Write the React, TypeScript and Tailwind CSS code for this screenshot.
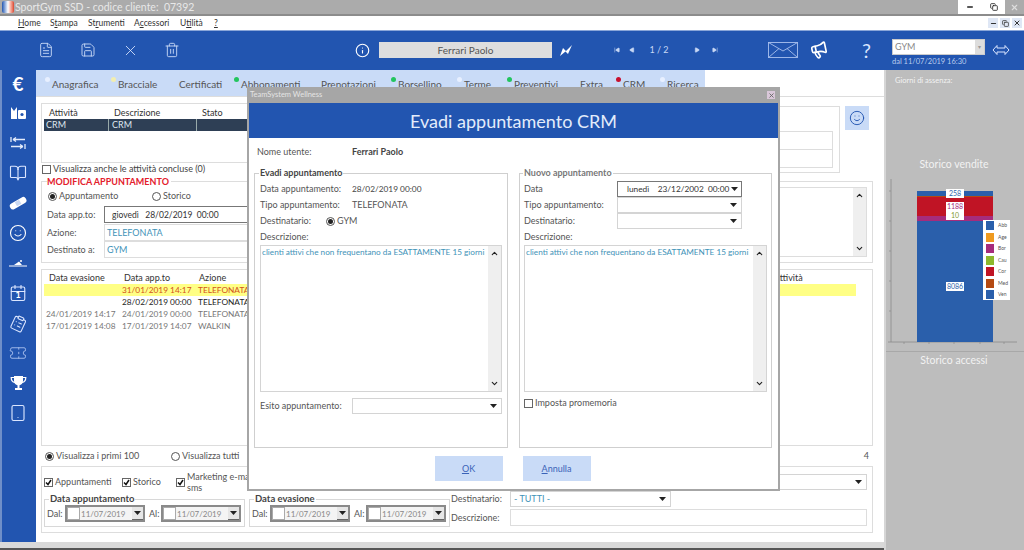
import React from "react";
import { FileText, Save, X, Trash2, Info, SkipBack, SkipForward, Play, Megaphone, BookOpen, Smile, Calendar, ClipboardList, Ticket, Tablet, Minus, Copy, ChevronUp, ChevronDown } from "lucide-react";

const Caret = () => (
  <svg width="7" height="4" viewBox="0 0 7 4" className="shrink-0"><polygon points="0,0 7,0 3.5,4" fill="#222" /></svg>
);

const U = ({ t, i }: { t: string; i: number }) => (
  <span>
    {t.slice(0, i)}
    <span className="underline">{t[i]}</span>
    {t.slice(i + 1)}
  </span>
);

const Select = ({ w, text, dark }: { w: string; text?: string; dark?: boolean }) => (
  <div className={`${w} h-[16px] flex items-center justify-between pr-[4px] pl-[3px] border bg-white ${dark ? "border-[#777]" : "border-[#d4d4d4]"}`}>
    <span className="text-[#3f93b8] whitespace-nowrap">{text}</span>
    <Caret />
  </div>
);

const ScrollBar = () => (
  <div className="w-[13px] bg-[#efefef] flex flex-col justify-between items-center py-[3px] shrink-0">
    <ChevronUp size={9} strokeWidth={3} color="#222" />
    <ChevronDown size={9} strokeWidth={3} color="#222" />
  </div>
);

const Dot = ({ c }: { c: string }) => <span className={`w-[5px] h-[5px] rounded-full mb-[8px] ml-[-1px] shrink-0 ${c}`} />;

const Radio = ({ on, label }: { on?: boolean; label: string }) => (
  <span className="flex items-center gap-[2px] whitespace-nowrap">
    <span className="w-[9px] h-[9px] rounded-full border border-[#555] flex items-center justify-center bg-white">
      {on && <span className="w-[5px] h-[5px] rounded-full bg-[#222]" />}
    </span>
    {label}
  </span>
);

const Check = ({ on }: { on?: boolean }) => (
  <span className="w-[9px] h-[9px] border border-[#666] bg-white flex items-center justify-center shrink-0">
    {on && (
      <svg width="7" height="7" viewBox="0 0 7 7"><path d="M1 3.5 L3 5.5 L6 1" stroke="#111" strokeWidth="1.5" fill="none" /></svg>
    )}
  </span>
);

const DateBox = () => (
  <div className="w-[80px] h-[17px] flex items-center border-2 border-[#8a8a8a] bg-[#f4f4f4] shrink-0">
    <span className="w-[13px] h-[13px] border border-[#aaa] bg-white shrink-0" />
    <span className="ml-[1px] text-[#888] flex-1 text-[8px]">11/07/2019</span>
    <span className="w-[11px] h-[13px] bg-[#e6e6e6] border-b border-[#666] flex items-center justify-center"><Caret /></span>
  </div>
);

const DateGroup = ({ title }: { title: string }) => (
  <fieldset className="w-[201px] min-w-0 shrink-0 border border-[#d8d8d8] px-[2px] h-[34px]">
    <legend className="ml-[2px] px-[1px] font-bold text-[#444] leading-[12px] text-[9.5px]">{title}</legend>
    <div className="flex items-center gap-[2px]">
      <span className="w-[16px]">Dal:</span>
      <DateBox />
      <span className="ml-[2px] w-[10px]">Al:</span>
      <DateBox />
    </div>
  </fieldset>
);

const tabs: [string, string, string][] = [
  ["Anagrafica", "bg-[#e8f0ff]", "w-[66px]"],
  ["Bracciale", "bg-[#f2eeb0]", "w-[61px]"],
  ["Certificati", "bg-transparent", "w-[62px]"],
  ["Abbonamenti", "bg-[#22c55e]", "w-[80px]"],
  ["Prenotazioni", "bg-transparent", "w-[77px]"],
  ["Borsellino", "bg-[#22c55e]", "w-[66px]"],
  ["Terme", "bg-[#e8f0ff]", "w-[50px]"],
  ["Preventivi", "bg-[#22c55e]", "w-[66px]"],
  ["Extra", "bg-transparent", "w-[43px]"],
  ["CRM", "bg-[#c8102e]", "w-[44px]"],
  ["Ricerca", "bg-[#e8f0ff]", "w-[40px]"],
];

const sideIcons = [
  <span className="text-[19px] font-bold text-white leading-none">€</span>,
  <svg width="17" height="14" viewBox="0 0 17 14"><path d="M1 1 L4 5 L7 1 V13 H1Z" fill="#fff" /><rect x="8" y="4" width="8" height="9" rx="1" fill="#fff" /><circle cx="12" cy="8.5" r="1.6" fill="#2255b0" /></svg>,
  <svg width="16" height="14" viewBox="0 0 16 14" fill="none" stroke="#e4ecfb" strokeWidth="1.3"><path d="M1 1V6M3 3.5H15M3 3.5L6 1.5M3 3.5L6 5.5M15 8V13M13 10.5H1M13 10.5L10 8.5M13 10.5L10 12.5" /></svg>,
  <BookOpen size={18} color="#dbe6ff" strokeWidth={1.5} />,
  <svg width="20" height="14" viewBox="0 0 20 14"><rect x="1" y="4" width="18" height="6.5" rx="3" fill="#fff" transform="rotate(-30 10 7)" /><rect x="7.5" y="4.8" width="5" height="4.6" fill="#c9d8f2" transform="rotate(-30 10 7)" /></svg>,
  <Smile size={18} color="#fff" strokeWidth={1.5} />,
  <svg width="20" height="10" viewBox="0 0 20 10"><path d="M1 8h18" stroke="#fff" strokeWidth="1" /><path d="M6 7 L11 3.5 L14 7z" fill="#fff" /><circle cx="13" cy="3" r="1" fill="#fff" /></svg>,
  <span className="relative flex items-center justify-center"><Calendar size={18} color="#dbe6ff" strokeWidth={1.5} /><span className="absolute text-[9px] font-bold text-white top-[5px]">1</span></span>,
  <ClipboardList size={17} color="#dbe6ff" strokeWidth={1.5} className="rotate-[25deg]" />,
  <Ticket size={18} color="#a9c1ee" strokeWidth={1.2} />,
  <svg width="17" height="16" viewBox="0 0 17 16"><path d="M4 1H13V6C13 8.5 11 10 9.5 10.3V13H12V15H5V13H7.5V10.3C6 10 4 8.5 4 6Z" fill="#fff" /><path d="M4 2.5H1.2C1.2 5.5 2.5 7 5 7.5M13 2.5H15.8C15.8 5.5 14.5 7 12 7.5" fill="none" stroke="#fff" strokeWidth="1.2" /></svg>,
  <Tablet size={18} color="#dbe6ff" strokeWidth={1.5} />,
];

const rows: [string, string, string, string][] = [
  ["", "31/01/2019 14:17", "TELEFONATA", "text-[#d2521c] bg-[#ffff85]"],
  ["", "28/02/2019 00:00", "TELEFONATA", "text-[#222]"],
  ["24/01/2019 14:17", "24/01/2019 00:00", "TELEFONATA", "text-[#777]"],
  ["17/01/2019 14:08", "17/01/2019 14:07", "WALKIN", "text-[#777]"],
];

const legend: [string, string][] = [
  ["#2a5fab", "Abb"], ["#ef9a1f", "Age"], ["#a62c7c", "Bor"], ["#8db82c", "Cau"], ["#c01425", "Cor"], ["#b44a12", "Med"], ["#2a5fab", "Ven"],
];

const desc = "clienti attivi che non frequentano da ESATTAMENTE 15 giorni";

export default function App() {
  return (
    <div className="w-[1024px] h-[550px] overflow-hidden relative flex flex-col bg-white text-[9px] leading-[12px] text-[#555] font-['Lato',sans-serif]">
      {/* Title bar */}
      <div className="h-[16px] bg-[#ababab] border-b-2 border-[#8c8c8c] flex items-start shrink-0">
        <span className="w-[12px] h-[12px] ml-[2px] mt-[1px] rounded-[2px] bg-gradient-to-r from-[#2255b0] via-white to-[#d9402a]" />
        <span className="ml-[1px] text-[10.5px] leading-[14px] text-[#e8e8e8] whitespace-pre">SportGym SSD - codice cliente:  07392</span>
        <div className="ml-auto flex h-[14px]">
          <span className="w-[24px] bg-white flex items-center justify-center"><Minus size={8} strokeWidth={4} color="#222" /></span>
          <span className="w-[23px] bg-white flex items-center justify-center"><Copy size={8} strokeWidth={2.5} color="#222" /></span>
          <span className="w-[19px] flex items-center justify-center"><X size={9} strokeWidth={3} color="#ddd" /></span>
        </div>
      </div>
      {/* Menu */}
      <div className="h-[14px] bg-white flex items-center shrink-0 pl-[18px] text-[8.5px] text-[#333]">
        <span className="w-[32px]"><U t="Home" i={0} /></span>
        <span className="w-[38px]"><U t="Stampa" i={1} /></span>
        <span className="w-[46px]"><U t="Strumenti" i={2} /></span>
        <span className="w-[46px]"><U t="Accessori" i={1} /></span>
        <span className="w-[34px]"><U t="Utilità" i={1} /></span>
        <span><U t="?" i={0} /></span>
        <div className="ml-auto flex gap-[2px] mr-[2px]">
          {[<Minus size={7} strokeWidth={4} />, <Copy size={7} strokeWidth={2.5} />, <X size={8} strokeWidth={3} />].map((ic, i) => (
            <span key={i} className="w-[10px] h-[10px] bg-[#dfe7f5] flex items-center justify-center text-[#333]">{ic}</span>
          ))}
        </div>
      </div>
      {/* Top blue bar */}
      <div className="h-[40px] bg-[#2255b0] border-t border-[#8aa6d8] pb-[1px] flex items-center shrink-0 text-[#c8d8f5]">
        <div className="ml-[25px] w-[42px] flex justify-center"><FileText size={16} strokeWidth={1.4} /></div>
        <div className="w-[42px] flex justify-center"><Save size={16} strokeWidth={1.4} /></div>
        <div className="w-[42px] flex justify-center"><X size={17} strokeWidth={1.2} color="#dbe6ff" /></div>
        <div className="w-[42px] flex justify-center"><Trash2 size={16} strokeWidth={1.4} /></div>
        <div className="ml-[158px] w-[22px] flex justify-center"><Info size={15} strokeWidth={1.8} color="#fff" /></div>
        <div className="ml-[6px] w-[173px] h-[16px] bg-[#dedede] text-[#555] text-[10px] flex items-center justify-center">Ferrari Paolo</div>
        <div className="ml-[6px] w-[16px] flex justify-center">
          <svg width="14" height="13" viewBox="0 0 14 13"><path d="M1 12 L4 4 L7 7 L13 1 L9 10 L6.5 7.5Z" fill="#fff" /></svg>
        </div>
        <div className="ml-[40px] flex items-center gap-[9px]">
          <SkipBack size={6} fill="#c8d8f5" />
          <Play size={6} fill="#c8d8f5" className="rotate-180" />
        </div>
        <div className="w-[46px] ml-[1px] text-center text-[#c8d8f5]">1 / 2</div>
        <div className="ml-[12px] flex items-center gap-[12px]">
          <Play size={6} fill="#c8d8f5" />
          <SkipForward size={6} fill="#c8d8f5" />
        </div>
        <div className="ml-[50px]">
          <svg width="30" height="16" viewBox="0 0 30 16" fill="none" stroke="#a9c1ee" strokeWidth="0.9"><rect x="0.5" y="0.5" width="29" height="15" /><path d="M0.5 0.5 L15 9 L29.5 0.5M0.5 15.5 L11 6.5M29.5 15.5 L19 6.5" /></svg>
        </div>
        <div className="ml-[12px]"><Megaphone size={18} strokeWidth={2.2} color="#fff" className="-rotate-12" /></div>
        <div className="ml-[34px] text-[20px] leading-none text-[#dbe6ff] w-[12px]">?</div>
        <div className="ml-[18px] mt-[5px] flex flex-col">
          <div className="w-[93px] h-[16px] bg-white border border-[#ccc] flex items-center justify-between pl-[2px] text-[#888]">
            <span>GYM</span>
            <span className="w-[9px] h-[14px] bg-[#ddd] flex items-center justify-center text-[#999] text-[6px]">▾</span>
          </div>
          <span className="text-[7.5px] leading-[10px] mt-[2px] text-[#b9ccee]">dal 11/07/2019 16:30</span>
        </div>
        <div className="ml-[7px] w-[18px]">
          <svg width="18" height="12" viewBox="0 0 18 12"><path d="M1 6 L5 1.5 V4 H13 V1.5 L17 6 L13 10.5 V8 H5 V10.5 Z" fill="none" stroke="#dbe6ff" strokeWidth="1" /></svg>
        </div>
      </div>
      {/* Body */}
      <div className="flex flex-1 min-h-0">
        <div className="w-[884px] shrink-0 flex flex-col">
          <div className="flex h-[472px] shrink-0">
            <aside className="w-[36px] bg-[#2255b0] flex flex-col items-center shrink-0 border-l-2 border-[#6f8fc8]">
              <div className="-mt-[2px] flex flex-col items-center">
                {sideIcons.map((ic, i) => (
                  <div key={i} className="h-[30px] flex items-center justify-center shrink-0 mr-[2px]">{ic}</div>
                ))}
              </div>
            </aside>
            <main className="w-[848px] bg-white flex flex-col shrink-0">
              <div className="h-[27px] border-b border-[#dddddd] shrink-0">
                <div className="w-[669px] h-[26px] bg-[#c9dbf7] flex items-center pl-[10px] text-[10px] text-[#555]">
                  {tabs.map(([t, d, w]) => (
                    <div key={t} className={`${w} flex items-center shrink-0 gap-[1px]`}>
                      <Dot c={d} />
                      <span className="pl-[1px] pt-[1px] whitespace-nowrap">{t}</span>
                    </div>
                  ))}
                </div>
              </div>
              <div className="pl-[5px] flex flex-col">
                {/* Top row */}
                <div className="flex mt-[6px] h-[72px]">
                  <div className="w-[500px] flex flex-col">
                    <div className="h-[60px] border border-[#ddd] px-[2px] pt-[3px]">
                      <div className="flex h-[12px] text-[#333]">
                        <span className="w-[65px] pl-[5px]">Attività</span>
                        <span className="w-[88px] pl-[5px]">Descrizione</span>
                        <span className="pl-[5px]">Stato</span>
                      </div>
                      <div className="flex h-[12px] bg-[#2e3f55] text-[#dfe6ef]">
                        <span className="w-[65px] pl-[2px] border-r border-[#9aa]">CRM</span>
                        <span className="w-[88px] pl-[3px] border-r border-[#9aa]">CRM</span>
                      </div>
                    </div>
                    <div className="flex items-center gap-[2px] text-[#444] ml-[1px]"><Check /> Visualizza anche le attività concluse (0)</div>
                  </div>
                  <div className="w-[299px] mt-[3px] h-[67px] border border-[#ddd] flex flex-col items-end pr-[6px] pt-[24px]">
                    <div className="w-[200px] h-[19px] border border-[#ddd]" />
                    <div className="w-[200px] h-[18px] border border-[#ddd] border-t-0" />
                  </div>
                  <div className="ml-[5px] mt-[3px] w-[24px] h-[24px] bg-[#c9dbf7] flex items-center justify-center">
                    <Smile size={16} strokeWidth={1.4} color="#2255b0" />
                  </div>
                </div>
                {/* Modifica */}
                <div className="mt-[6px] w-[832px] h-[82px] border border-[#ddd] flex pl-[5px] pr-[5px] pt-[5px]">
                  <div className="w-[500px] flex flex-col">
                    <span className="font-bold text-[#e3202c] mt-[-11px] bg-white w-fit pr-[2px] whitespace-nowrap leading-[12px]">MODIFICA APPUNTAMENTO</span>
                    <div className="flex items-center mt-[1px] h-[14px] text-[#555] pl-[1px]">
                      <span className="w-[104px]"><Radio on label="Appuntamento" /></span>
                      <Radio label="Storico" />
                    </div>
                    <div className="flex items-center h-[17px] mt-[3px]"><span className="w-[57px]">Data app.to:</span><div className="flex-1 h-[17px] border border-[#777] flex items-center pl-[7px] text-[#333] text-[8.5px] whitespace-pre">giovedì   28/02/2019  00:00</div></div>
                    <div className="flex items-center h-[17px] mt-[1px]"><span className="w-[57px]">Azione:</span><div className="flex-1 h-[17px] border border-[#ddd] flex items-center pl-[2px] text-[#3f93b8]">TELEFONATA</div></div>
                    <div className="flex items-center h-[17px]"><span className="w-[57px]">Destinato a:</span><div className="flex-1 h-[17px] border border-[#ddd] flex items-center pl-[2px] text-[#3f93b8]">GYM</div></div>
                  </div>
                  <div className="flex-1 h-[70px] border border-[#ddd] flex justify-end ml-[10px]"><ScrollBar /></div>
                </div>
                {/* Storico */}
                <div className="mt-[6px] w-[832px] h-[177px] border border-[#ddd] pt-[2px] pl-[2px]">
                  <div className="flex h-[12px] items-center text-[#333]">
                    <span className="w-[77px] pl-[5px]">Data evasione</span>
                    <span className="w-[75px] pl-[3px]">Data app.to</span>
                    <span className="w-[578px] pl-[3px]">Azione</span>
                    <span>Attività</span>
                  </div>
                  {rows.map(([a, b, c, cl], i) => (
                    <div key={i} className={`flex h-[12px] items-center w-[812px] text-[8.3px] ${cl}`}>
                      <span className="w-[77px] pl-[2px] whitespace-nowrap">{a}</span>
                      <span className="w-[75px] pl-[1px] whitespace-nowrap">{b}</span>
                      <span className="pl-[2px]">{c}</span>
                    </div>
                  ))}
                </div>
                {/* Radio row */}
                <div className="h-[20px] w-[832px] flex items-center pl-[4px] pr-[4px]">
                  <span className="w-[126px]"><Radio on label="Visualizza i primi 100" /></span>
                  <Radio label="Visualizza tutti" />
                  <span className="ml-auto">4</span>
                </div>
                {/* Filters */}
                <div className="w-[832px] h-[67px] border border-[#ddd] px-[2px] pt-[3px] flex flex-col">
                  <div className="h-[24px] flex items-center text-[#555] pr-[3px]">
                    <span className="flex items-center gap-[2px] w-[78px]"><Check on /> Appuntamenti</span>
                    <span className="flex items-center gap-[2px] w-[54px]"><Check on /> Storico</span>
                    <span className="flex items-center gap-[2px]"><Check on /><span className="w-[80px] leading-[11px]">Marketing e-mail sms</span></span>
                    <div className="ml-auto"><Select w="w-[300px]" /></div>
                  </div>
                  <div className="flex -mt-[1px] gap-[4px]">
                    <DateGroup title="Data appuntamento" />
                    <DateGroup title="Data evasione" />
                    <div className="flex flex-col -ml-[3px] -mt-[2px]">
                      <div className="flex items-center h-[16px]"><span className="w-[59px]">Destinatario:</span><Select w="w-[161px]" text="- TUTTI -" /></div>
                      <div className="flex items-center h-[17px] mt-[2px]"><span className="w-[59px]">Descrizione:</span><div className="w-[357px] h-[17px] border border-[#ddd]" /></div>
                    </div>
                  </div>
                </div>
              </div>
            </main>
          </div>
          <div className="h-[8px] bg-[#d9d9d9] border-b-2 border-[#555] shrink-0" />
        </div>
        {/* Right panel */}
        <aside className="flex-1 bg-[#bdbdbd] border-l-2 border-[#d6d6d6] border-r-2 border-r-[#9a9a9a] text-[#f2f2f2] flex flex-col">
          <span className="ml-[9px] mt-[6px] text-[7.5px] leading-[10px]">Giorni di assenza:</span>
          <div className="mt-[71px] text-center text-[10.5px] leading-[14px] pr-[2px]">Storico vendite</div>
          <div className="relative h-[171px] mt-[6px]">
            <svg width="138" height="171" viewBox="0 0 138 171">
              <path d="M5 2V165M2 165H131" stroke="#8a8a8a" strokeWidth="0.8" fill="none" />
              <path d="M3 14h2M3 44h2M3 74h2M3 104h2M3 134h2M18 165v2M43 165v2M68 165v2M94 165v2M118 165v2" stroke="#8a8a8a" strokeWidth="0.7" />
              <rect x="31" y="14" width="76" height="5" fill="#2a5fab" />
              <rect x="31" y="19" width="76" height="1" fill="#b44a12" />
              <rect x="31" y="20" width="76" height="19" fill="#c01425" />
              <rect x="31" y="39" width="76" height="5" fill="#a62c7c" />
              <rect x="31" y="44" width="76" height="121" fill="#2a5fab" />
            </svg>
            {([["258", 12, "#2a5fab"], ["1188", 25, "#a62c7c"], ["10", 34, "#7f9a30"], ["8086", 105, "#2a5fab"]] as [string, number, string][]).map(([t, y, c]) => (
              <span key={t} className="absolute left-[60px] w-[18px] h-[9px] bg-white text-[7px] leading-[9px] text-center" style={{ top: y, color: c }}>{t}</span>
            ))}
            <div className="absolute left-[97px] top-[43px] w-[27px] h-[80px] bg-white flex flex-col justify-center gap-[2.5px] pl-[3px] text-[5px] leading-[9px] text-[#555]">
              {legend.map(([c, t]) => (
                <div key={t} className="flex items-center gap-[4px]"><span className="w-[8px] h-[9px]" style={{ background: c }} />{t}</div>
              ))}
            </div>
          </div>
          <div className="border-t border-[#a8a8a8] mt-[3px] text-center text-[10.5px] leading-[14px] pt-[1px] pr-[2px]">Storico accessi</div>
        </aside>
      </div>

      {/* Modal */}
      <div className="absolute left-[247px] top-[87px] w-[533px] h-[404px] bg-white border-2 border-t-0 border-[#a6a6a6] flex flex-col">
        <div className="h-[16px] bg-[#a6a6a6] flex items-center justify-between pr-[3px] shrink-0 text-[7.5px] text-[#e4e4e4]">
          <span className="pl-[1px]">TeamSystem Wellness</span>
          <span className="w-[8px] h-[8px] bg-[#d9c7d9] flex items-center justify-center"><X size={7} strokeWidth={3} color="#666" /></span>
        </div>
        <div className="h-[35px] bg-[#2255b0] text-[#e3ecfb] text-[18px] flex items-center justify-center shrink-0">Evadi appuntamento CRM</div>
        <div className="flex h-[14px] items-center mt-[7px] ml-[8px] shrink-0">
          <span className="w-[95px]">Nome utente:</span>
          <span className="font-bold text-[#444]">Ferrari Paolo</span>
        </div>
        <div className="flex ml-[5px] mt-[8px] gap-[11px] shrink-0">
          <fieldset className="w-[254px] min-w-0 h-[281px] border border-[#cfcfcf] px-[5px]">
            <legend className="-ml-[1px] px-[1px] font-bold text-[#444] leading-[12px]">Evadi appuntamento</legend>
            <div className="pt-[2px] flex flex-col">
              <div className="h-[16px] flex items-center"><span className="w-[92px]">Data appuntamento:</span><span className="text-[8.3px] text-[#444]">28/02/2019 00:00</span></div>
              <div className="h-[16px] flex items-center"><span className="w-[92px]">Tipo appuntamento:</span>TELEFONATA</div>
              <div className="h-[16px] flex items-center"><span className="w-[66px]">Destinatario:</span><Radio on label="GYM" /></div>
              <div className="h-[16px] flex items-center">Descrizione:</div>
              <div className="h-[147px] border border-[#d4d4d4] flex">
                <p className="flex-1 min-w-0 pl-[1px] text-[8.2px] text-[#3f93b8] whitespace-nowrap overflow-hidden">{desc}</p>
                <ScrollBar />
              </div>
              <div className="flex items-center mt-[6px]"><span className="w-[92px]">Esito appuntamento:</span><Select w="w-[151px]" /></div>
            </div>
          </fieldset>
          <fieldset className="w-[253px] min-w-0 h-[281px] border border-[#cfcfcf] px-[4px]">
            <legend className="-ml-[1px] px-[1px] font-bold text-[#777] leading-[12px]">Nuovo appuntamento</legend>
            <div className="pt-[2px] flex flex-col">
              <div className="h-[16px] flex items-center"><span className="w-[93px]">Data</span>
                <div className="w-[125px] h-[16px] border border-[#777] flex items-center justify-between pl-[9px] pr-[3px] text-[#333]"><span className="whitespace-pre text-[8.3px]">lunedì    23/12/2002  00:00</span><Caret /></div>
              </div>
              <div className="h-[16px] flex items-center"><span className="w-[93px]">Tipo appuntamento:</span><Select w="w-[125px]" /></div>
              <div className="h-[16px] flex items-center"><span className="w-[93px]">Destinatario:</span><Select w="w-[125px]" /></div>
              <div className="h-[16px] flex items-center">Descrizione:</div>
              <div className="h-[147px] border border-[#d4d4d4] flex">
                <p className="flex-1 min-w-0 pl-[1px] text-[8.2px] text-[#3f93b8] whitespace-nowrap overflow-hidden">{desc}</p>
                <ScrollBar />
              </div>
              <div className="flex items-center gap-[2px] mt-[5px]"><Check /> Imposta promemoria</div>
            </div>
          </fieldset>
        </div>
        <div className="flex justify-center gap-[20px] mt-[8px] shrink-0 pr-[2px] text-[#3a63b8]">
          <div className="w-[68px] h-[25px] bg-[#c9dbf7] flex items-center justify-center"><U t="OK" i={0} /></div>
          <div className="w-[68px] h-[25px] bg-[#c9dbf7] flex items-center justify-center"><U t="Annulla" i={0} /></div>
        </div>
      </div>
    </div>
  );
}
